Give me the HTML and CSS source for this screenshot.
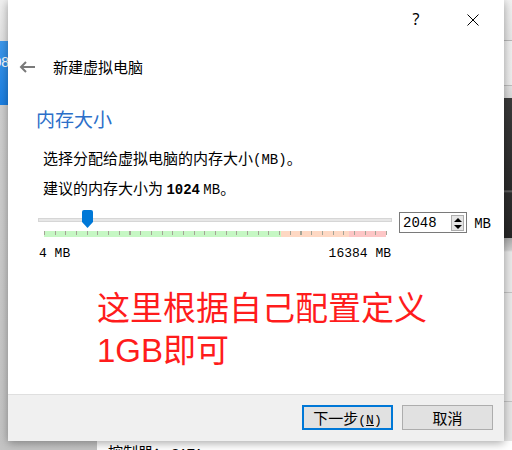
FILE: index.html
```html
<!DOCTYPE html>
<html lang="zh-CN">
<head>
<meta charset="utf-8">
<title>新建虚拟电脑</title>
<link rel="stylesheet" href="styles.css">
</head>
<body>
<div class="desktop">
  <div class="bg-tile"><span>08</span></div>
  <div class="bg-right"></div>
  <div class="bg-panel">控制器： <span class="lat">SATA</span></div>

  <div class="dialog">
    <div class="titlebar">
      <span class="help">?</span>
      <svg class="close" width="12" height="12" viewBox="0 0 12 12">
        <path d="M0.5 0.5 L11.5 11.5 M11.5 0.5 L0.5 11.5" stroke="#000" stroke-width="1" fill="none"/>
      </svg>
    </div>

    <div class="header">
      <svg class="back" width="16" height="12" viewBox="0 0 16 12">
        <path d="M2 6 H16 M7 1 L2 6 L7 11" stroke="#7a7a7a" stroke-width="2" fill="none"/>
      </svg>
      <span class="wizard-title">新建虚拟电脑</span>
    </div>

    <div class="page">
      <h1 class="heading">内存大小</h1>
      <p class="desc">选择分配给虚拟电脑的内存大小<span class="lat">(MB)</span>。</p>
      <p class="desc desc2">建议的内存大小为 <b class="lat">1024</b> <span class="lat">MB</span>。</p>

      <div class="mem-row">
        <div class="slider">
          <div class="track"><div class="thumb" style="left:43px"></div></div>
          <div class="scale">
            <div class="zone zone-ok" style="width:237px"></div>
            <div class="zone zone-warn" style="width:68px"></div>
            <div class="zone zone-bad" style="width:37px"></div>
            <div class="ticks"></div>
          </div>
          <div class="scale-labels">
            <span class="lat">4 MB</span>
            <span class="lat">16384 MB</span>
          </div>
        </div>
        <div class="spin">
          <span class="spin-value lat">2048</span>
          <span class="spin-buttons">
            <span class="spin-up"></span>
            <span class="spin-down"></span>
          </span>
        </div>
        <span class="unit lat">MB</span>
      </div>

      <div class="note">这里根据自己配置定义<br>1GB即可</div>
    </div>

    <div class="footer">
      <button class="btn btn-primary">下一步<span class="lat">(<u>N</u>)</span></button>
      <button class="btn">取消</button>
    </div>
  </div>
</div>
</body>
</html>
```

FILE: styles.css
```css
* {
  box-sizing: border-box;
}

html, body {
  margin: 0;
  padding: 0;
}

body {
  width: 512px;
  height: 450px;
  overflow: hidden;
  font-family: "Noto Sans CJK SC", "Noto Sans", sans-serif;
  color: #000;
}

.desktop {
  position: relative;
  width: 512px;
  height: 450px;
  background: linear-gradient(to bottom, #f0f0f0 0, #e2e2e2 40px, #cfcfcf 110px, #c4c4c4 100%);
}

/* backdrop windows behind the dialog */
.bg-tile {
  position: absolute;
  left: 0;
  top: 41px;
  width: 8px;
  height: 64px;
  background: linear-gradient(to bottom, #3d98ec, #1b7fe2);
  overflow: hidden;
}

.bg-tile span {
  position: absolute;
  right: -1px;
  top: 13px;
  color: #fff;
  font-family: "Liberation Sans", sans-serif;
  font-size: 14px;
  line-height: 16px;
}

.bg-right {
  position: absolute;
  left: 504px;
  top: 0;
  width: 8px;
  height: 450px;
  background: linear-gradient(to bottom,
    #f2f2f2 0, #e6e6e6 40px, #b8b8b8 40px, #b8b8b8 41px,
    #efefef 41px, #ececec 85px, #bdbdbd 85px, #bdbdbd 86px,
    #e2e2e2 86px, #d8d8d8 98px,
    #3a3a3a 98px, #2a2a2a 190px, #6a6a6a 191px, #2e2e2e 193px, #262626 238px,
    #a8a8a8 238px, #cfcfcf 250px, #e9e9e9 252px, #e9e9e9 292px,
    #c4c4c4 292px, #c4c4c4 293px, #e9e9e9 293px, #e9e9e9 401px,
    #c4c4c4 401px, #c4c4c4 402px, #e6e6e6 402px);
}

.bg-panel {
  position: absolute;
  left: 97px;
  top: 441px;
  right: 0;
  bottom: 0;
  background: #fff;
  padding-left: 11px;
  font-size: 15px;
  line-height: 20px;
  padding-top: 1px;
  white-space: nowrap;
}

/* dialog window */
.dialog {
  position: absolute;
  left: 8px;
  top: 0;
  width: 496px;
  height: 441px;
  background: #fff;
  display: flex;
  flex-direction: column;
  box-shadow: 0 2px 9px rgba(0, 0, 0, 0.35);
}

.titlebar {
  height: 38px;
  display: flex;
  align-items: center;
  justify-content: flex-end;
  padding-right: 25px;
  gap: 44px;
}

.help {
  font-family: "Noto Sans", sans-serif;
  font-size: 16px;
  line-height: 20px;
  width: 14px;
  text-align: center;
  margin-top: -1px;
}

.close {
  display: block;
  margin-top: 1px;
}

.header {
  height: 58px;
  display: flex;
  align-items: center;
  padding-left: 11px;
  gap: 18px;
}

.back {
  display: block;
  margin-top: -1px;
}

.wizard-title {
  font-size: 15px;
  line-height: 20px;
}

.page {
  padding-left: 28px;
  padding-right: 13px;
}

.heading {
  margin: 11px 0 0 0;
  font-size: 19px;
  line-height: 24px;
  font-weight: normal;
  color: #2c6fc9;
}

.desc {
  margin: 17px 0 0 0;
  padding-left: 7px;
  font-size: 15px;
  line-height: 20px;
  white-space: nowrap;
}

.desc2 {
  margin-top: 10px;
}

.lat {
  font-family: "Liberation Mono", "DejaVu Sans Mono", monospace;
  font-size: 13px;
  line-height: 1;
}

.desc .lat {
  font-size: 14px;
}

b.lat {
  font-weight: bold;
}

.mem-row {
  margin: 14px 0 0 2px;
  display: flex;
  align-items: flex-start;
}

.slider {
  width: 354px;
  display: flex;
  flex-direction: column;
}

.track {
  position: relative;
  margin-top: 6px;
  height: 4px;
  background: #e7e7e7;
  border: 1px solid #d6d6d6;
}

.thumb {
  position: absolute;
  top: -9px;
  width: 11px;
  height: 18px;
  background: #0078d7;
  border-radius: 2px 2px 0 0;
  clip-path: polygon(0 0, 100% 0, 100% 66%, 50% 100%, 0 66%);
}

.scale {
  position: relative;
  display: flex;
  margin: 9px 6px 0 6px;
  height: 6px;
}

.zone {
  height: 6px;
}

.zone-ok { background: #c6f7c4; }
.zone-warn { background: #fed8c3; }
.zone-bad { background: #fdc6c6; }

.ticks {
  position: absolute;
  left: 0;
  top: 0;
  width: 343px;
  height: 4px;
  background: repeating-linear-gradient(to right, #a4a496 0, #a4a496 1px, transparent 1px, transparent 10.6875px);
}

.scale-labels {
  margin-top: 8px;
  height: 16px;
  display: flex;
  justify-content: space-between;
  align-items: center;
  padding: 0 1px;
  white-space: nowrap;
}

.spin {
  margin-left: 7px;
  width: 70px;
  height: 21px;
  border: 1px solid #7a7a7a;
  display: flex;
  align-items: flex-start;
  padding: 2px 2px 0 3px;
}

.spin-value {
  flex: 1;
  line-height: 16px;
  font-size: 14px;
}

.spin-buttons {
  width: 13px;
  height: 16px;
  border: 1px solid #adadad;
  background: #e5e5e5;
  display: flex;
  flex-direction: column;
}

.spin-up,
.spin-down {
  flex: 1;
  display: flex;
  align-items: center;
  justify-content: center;
}

.spin-up::before {
  content: "";
  border-left: 4px solid transparent;
  border-right: 4px solid transparent;
  border-bottom: 4px solid #000;
}

.spin-down::before {
  content: "";
  border-left: 4px solid transparent;
  border-right: 4px solid transparent;
  border-top: 4px solid #000;
}

.unit {
  margin-left: 7px;
  line-height: 24px;
  font-size: 14px;
}

.note {
  margin: 27px 0 0 61px;
  font-family: "Liberation Sans", "Noto Sans CJK SC", sans-serif;
  font-size: 33px;
  line-height: 42px;
  color: #ff1c1c;
  white-space: nowrap;
}

.footer {
  margin-top: auto;
  height: 47px;
  border-top: 1px solid #dfdfdf;
  background: #f0f0f0;
  display: flex;
  justify-content: flex-end;
  align-items: flex-start;
  gap: 9px;
  padding: 10px 11px 0 0;
}

.btn {
  width: 91px;
  height: 25px;
  margin: 0;
  padding: 0;
  background: #e1e1e1;
  border: 1px solid #adadad;
  font-family: "Noto Sans CJK SC", "Noto Sans", sans-serif;
  font-size: 15px;
  line-height: 20px;
  color: #000;
}

.btn-primary {
  border: 2px solid #0078d7;
}

.btn u {
  text-decoration: underline;
}
```
